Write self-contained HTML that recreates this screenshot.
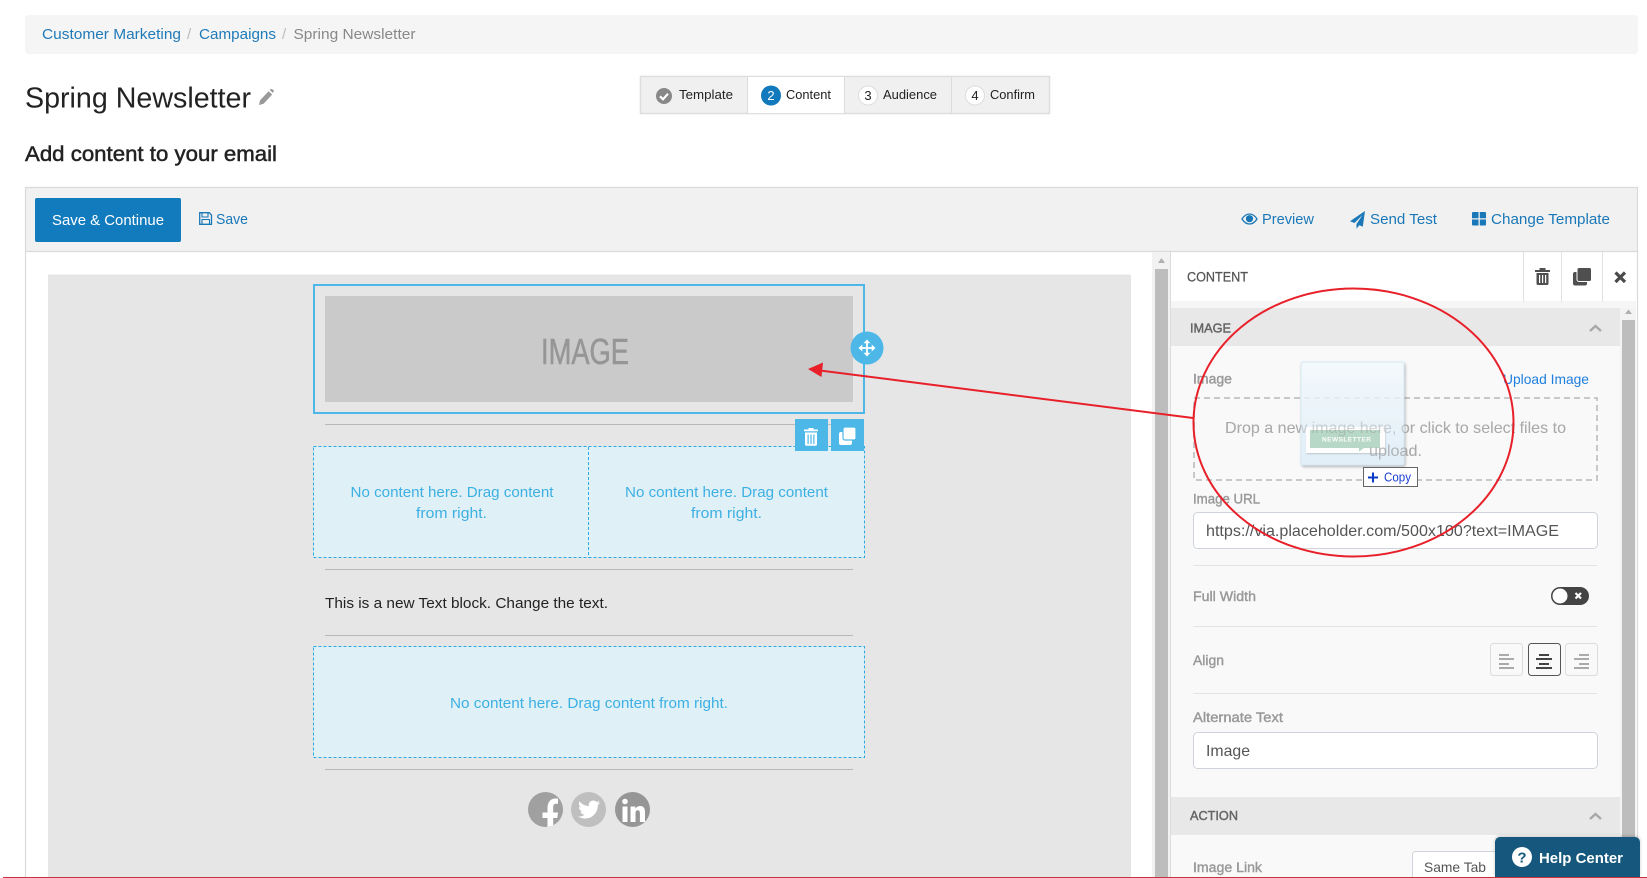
<!DOCTYPE html>
<html lang="en"><head><meta charset="utf-8"><title>Spring Newsletter</title>
<style>
html,body{margin:0;padding:0;background:#fff;width:1647px;height:878px;overflow:hidden}
svg{display:block}
text{font-family:"Liberation Sans",sans-serif;white-space:pre}
.lb{fill:#999;font-size:13.5px;stroke:#999;stroke-width:.4px}
.hd{fill:#666;font-size:13px;stroke:#666;stroke-width:.45px}
.bl{fill:#1a78b8;font-size:14.5px}
.st{fill:#222;font-size:13px}
.nc{fill:#3db0e3;font-size:14.5px}
.in{fill:#555;font-size:16px}
</style></head><body>
<svg xmlns="http://www.w3.org/2000/svg" width="1647" height="878" viewBox="0 0 1647 878">
<defs>
<linearGradient id="tg" x1="0" y1="0" x2="0" y2="1"><stop offset="0" stop-color="#f3f9fd"/><stop offset="1" stop-color="#dcedf8"/></linearGradient>
<filter id="sh" x="-10%" y="-10%" width="125%" height="125%"><feDropShadow dx="1" dy="1.5" stdDeviation="1.2" flood-color="#555" flood-opacity=".5"/></filter>
<filter id="sh2" x="-10%" y="-20%" width="120%" height="150%"><feDropShadow dx=".5" dy="1" stdDeviation=".7" flood-color="#555" flood-opacity=".35"/></filter>
<filter id="hs" x="-5%" y="-20%" width="110%" height="130%"><feDropShadow dx="0" dy="-1" stdDeviation="1.5" flood-color="#000" flood-opacity=".2"/></filter>
<clipPath id="c1"><circle cx="545.5" cy="809.5" r="17.5"/></clipPath>
</defs>

<!-- breadcrumb -->
<rect x="25" y="15" width="1613" height="39" rx="4" fill="#f5f5f5"/>
<text x="42" y="39" font-size="15" fill="#1f7ab8" textLength="139" lengthAdjust="spacingAndGlyphs">Customer Marketing</text>
<text x="187" y="39" font-size="15" fill="#bbb">/</text>
<text x="199" y="39" font-size="15" fill="#1f7ab8" textLength="77" lengthAdjust="spacingAndGlyphs">Campaigns</text>
<text x="282" y="39" font-size="15" fill="#bbb">/</text>
<text x="293.5" y="39" font-size="15" fill="#888" textLength="122" lengthAdjust="spacingAndGlyphs">Spring Newsletter</text>

<!-- title -->
<text x="25" y="107.5" font-size="29" fill="#222" textLength="226" lengthAdjust="spacingAndGlyphs">Spring Newsletter</text>
<path d="M259 105l1-4.6 8.600-9.200 3.600 3.300-8.600 9.200z M269.800 90l.8-.8c.5-.5 1.200-.5 1.700 0l1.200 1.100c.5.5.5 1.200 0 1.700l-.8.8z" fill="#999"/>

<!-- stepper -->
<rect x="640.500" y="76.500" width="409" height="37" fill="#f0f0f0" stroke="#dedede" stroke-width="1.500"/>
<rect x="748" y="77" width="96" height="36" fill="#fff"/>
<path d="M747.500 77v36M844.500 77v36M951.500 77v36" stroke="#dcdcdc" stroke-width="1"/>
<circle cx="664" cy="96" r="8" fill="#888"/>
<path d="M660 96.300l3 3 5-5.600" fill="none" stroke="#fff" stroke-width="2.200"/>
<text x="679" y="99" class="st" textLength="54" lengthAdjust="spacingAndGlyphs">Template</text>
<circle cx="771" cy="95.500" r="10" fill="#1279bd"/>
<text x="771" y="100" font-size="13" fill="#fff" text-anchor="middle">2</text>
<text x="786" y="99" class="st" textLength="45" lengthAdjust="spacingAndGlyphs">Content</text>
<circle cx="868" cy="95.500" r="9.500" fill="#fff" stroke="#ddd"/>
<text x="868" y="100" font-size="13" fill="#222" text-anchor="middle">3</text>
<text x="883" y="99" class="st" textLength="54" lengthAdjust="spacingAndGlyphs">Audience</text>
<circle cx="975" cy="95.500" r="9.500" fill="#fff" stroke="#ddd"/>
<text x="975" y="100" font-size="13" fill="#222" text-anchor="middle">4</text>
<text x="990" y="99" class="st" textLength="45" lengthAdjust="spacingAndGlyphs">Confirm</text>

<!-- heading -->
<text x="25" y="161" font-size="21" fill="#222" stroke="#222" stroke-width=".5" textLength="252" lengthAdjust="spacingAndGlyphs">Add content to your email</text>

<!-- editor frame -->
<rect x="26" y="188" width="1611" height="63" fill="#f1f1f1"/>
<path d="M25.500 878V187.500H1637.500V878M26 251.500H1637" fill="none" stroke="#dadada" stroke-width="1.200"/>

<!-- toolbar -->
<rect x="35" y="198" width="146" height="44" rx="2" fill="#117bbd"/>
<text x="52" y="225" font-size="14.500" fill="#fff" textLength="112" lengthAdjust="spacingAndGlyphs">Save &amp; Continue</text>
<path d="M199.700 212.700h9.500l2.300 2.300v9.300h-11.800z" fill="none" stroke="#1a78b8" stroke-width="1.300"/>
<path d="M202 213v4h6v-4M202 224v-4.500h7.500v4.500" fill="none" stroke="#1a78b8" stroke-width="1.100"/>
<text x="216" y="224" class="bl" textLength="32" lengthAdjust="spacingAndGlyphs">Save</text>

<path d="M1242 219c2-3.200 4.500-5 7.500-5s5.500 1.800 7.500 5c-2 3.200-4.500 5-7.500 5s-5.500-1.800-7.500-5z" fill="none" stroke="#1a78b8" stroke-width="1.300"/>
<circle cx="1249.500" cy="218.700" r="3.600" fill="#1a78b8"/>
<text x="1262" y="224" class="bl" textLength="52" lengthAdjust="spacingAndGlyphs">Preview</text>
<path d="M1365 211l-15 10.300 4.500 1.700 8-8-6 9v4.700l2.800-3.500 3.500 1.400z" fill="#1a78b8"/>
<text x="1370" y="224" class="bl" textLength="67" lengthAdjust="spacingAndGlyphs">Send Test</text>
<path d="M1472 213a1 1 0 0 1 1-1h5.500v6.200h-6.500zM1479.800 212h5.200a1 1 0 0 1 1 1v5.200h-6.200zM1472 219.500h6.500v6h-5.500a1 1 0 0 1-1-1zM1479.800 219.500h6.200v5a1 1 0 0 1-1 1h-5.200z" fill="#1a78b8"/>
<text x="1491" y="224" class="bl" textLength="119" lengthAdjust="spacingAndGlyphs">Change Template</text>

<!-- canvas -->
<rect x="26.500" y="252.500" width="1126" height="625" fill="#fff"/>
<rect x="48" y="274.500" width="1083" height="603" fill="#e6e6e6"/>
<rect x="1152" y="252.500" width="18" height="625" fill="#f2f2f2"/>
<rect x="1155" y="269" width="13" height="608" fill="#bdbdbd"/>
<path d="M1161.500 258l3.500 5h-7z" fill="#b0b0b0"/>

<rect x="314" y="285" width="550" height="128" fill="none" stroke="#4db8e8" stroke-width="2"/>
<rect x="325" y="296" width="528" height="106" fill="#cacaca"/>
<text x="541" y="364" font-size="36" fill="#969696" stroke="#969696" stroke-width=".55" textLength="88" lengthAdjust="spacingAndGlyphs">IMAGE</text>
<rect x="325" y="424" width="528" height="1" fill="#b8b8b8"/>

<rect x="313.500" y="446.500" width="551" height="111" fill="#dff0f7" stroke="#29abe2" stroke-dasharray="3 2"/>
<path d="M588.500 447v111" stroke="#29abe2" stroke-dasharray="3 2"/>
<text x="350.500" y="497" class="nc" textLength="203" lengthAdjust="spacingAndGlyphs">No content here. Drag content</text>
<text x="416" y="518" class="nc" textLength="71" lengthAdjust="spacingAndGlyphs">from right.</text>
<text x="625" y="497" class="nc" textLength="203" lengthAdjust="spacingAndGlyphs">No content here. Drag content</text>
<text x="691" y="518" class="nc" textLength="71" lengthAdjust="spacingAndGlyphs">from right.</text>

<!-- block controls -->
<rect x="795" y="419" width="33" height="32" fill="#4db8e8"/>
<rect x="831" y="419" width="33" height="32" fill="#4db8e8"/>
<path fill="#fff" fill-rule="evenodd" d="M804 429.500h14v1.800h-14zM808.500 428h5v1.500h-5zM805 432.500h12v11.800a1.500 1.500 0 0 1-1.500 1.500h-9a1.500 1.500 0 0 1-1.500-1.500zM807.500 434.500v9.500h1.200v-9.500zM810.400 434.500v9.500h1.200v-9.500zM813.300 434.500v9.500h1.200v-9.500z"/>
<rect x="839" y="432" width="13" height="13" rx="2" fill="#fff"/>
<rect x="843" y="427" width="13" height="13" rx="2" fill="#fff" stroke="#4db8e8" stroke-width="1.200"/>

<circle cx="867" cy="348" r="16.500" fill="#4db8e8"/>
<path d="M867 342v12M861 348h12" stroke="#fff" stroke-width="1.800"/>
<path d="M867 339.500l3.500 3.800h-7zM867 356.500l3.500-3.800h-7zM858.500 348l3.800-3.500v7zM875.500 348l-3.800-3.500v7z" fill="#fff"/>

<rect x="325" y="569" width="528" height="1" fill="#b8b8b8"/>
<text x="325" y="608" font-size="15" fill="#222" textLength="283" lengthAdjust="spacingAndGlyphs">This is a new Text block. Change the text.</text>
<rect x="325" y="635" width="528" height="1" fill="#b8b8b8"/>
<rect x="313.500" y="646.500" width="551" height="111" fill="#dff0f7" stroke="#29abe2" stroke-dasharray="3 2"/>
<text x="450" y="708" class="nc" textLength="278" lengthAdjust="spacingAndGlyphs">No content here. Drag content from right.</text>
<rect x="325" y="769" width="528" height="1" fill="#b8b8b8"/>

<!-- social -->
<circle cx="545.500" cy="809.500" r="17.500" fill="#a0a0a0"/>
<path clip-path="url(#c1)" fill="#fff" d="M547.500 828v-10h-5v-5.500h5v-4.500c0-6 3.200-9.500 8-9.500h2.500v5.200h-2c-2 0-2.800 1-2.800 3.300v5.500h4.800l-.7 5.500h-4.100v10z"/>
<circle cx="588.500" cy="809.500" r="17.500" fill="#bfbfbf"/>
<path transform="translate(578 798.500) scale(.92)" fill="#fff" d="M23.953 4.570a10 10 0 0 1-2.825.775 4.958 4.958 0 0 0 2.163-2.723c-.951.555-2.005.959-3.127 1.184a4.920 4.920 0 0 0-8.384 4.482C7.690 8.095 4.067 6.130 1.640 3.162a4.822 4.822 0 0 0-.666 2.475c0 1.710.870 3.213 2.188 4.096a4.904 4.904 0 0 1-2.228-.616v.060a4.923 4.923 0 0 0 3.946 4.827 4.996 4.996 0 0 1-2.212.085 4.936 4.936 0 0 0 4.604 3.417 9.867 9.867 0 0 1-6.102 2.105c-.390 0-.779-.023-1.170-.067a13.995 13.995 0 0 0 7.557 2.209c9.053 0 13.998-7.496 13.998-13.985 0-.210 0-.420-.015-.630A9.935 9.935 0 0 0 24 4.590z"/>
<circle cx="632.500" cy="809.500" r="17.500" fill="#969696"/>
<circle cx="625" cy="801.500" r="2.800" fill="#fff"/>
<rect x="622.500" y="806.500" width="5" height="15.500" fill="#fff"/>
<path fill="#fff" d="M630.500 806.500h4.800v2.200c1-1.500 2.800-2.700 4.800-2.700 3.400 0 4.900 2.200 4.900 6v10h-5.100v-8.800c0-2-.6-3-2.100-3-1.600 0-2.300 1-2.300 3v8.800h-5z"/>

<!-- right panel -->
<rect x="1170.500" y="252.500" width="466" height="625" fill="#fff"/>
<path d="M1170.500 252v626" stroke="#dcdcdc"/>
<rect x="1171" y="301" width="465" height="7" fill="#f6f6f6"/>
<rect x="1171" y="308" width="449" height="570" fill="#f9f9f9"/>
<rect x="1620" y="308" width="16" height="570" fill="#f3f3f3"/>
<rect x="1622" y="320" width="13" height="558" fill="#bdbdbd"/>
<path d="M1628.500 309.500l3.500 4.500h-7z" fill="#b0b0b0"/>
<path d="M1523.500 252v50M1561.500 252v50M1602.500 252v50" stroke="#e2e2e2"/>
<text x="1187" y="281.500" font-size="13.500" fill="#555" stroke="#555" stroke-width=".25" textLength="61" lengthAdjust="spacingAndGlyphs">CONTENT</text>
<path fill="#4f4f4f" fill-rule="evenodd" d="M1535 270h15v2h-15zM1539.500 268h6v2h-6zM1536.500 273h12v10.500a1.500 1.500 0 0 1-1.500 1.500h-9a1.500 1.500 0 0 1-1.500-1.500zM1539 275v8h1.200v-8zM1542 275v8h1.200v-8zM1545 275v8h1.200v-8z"/>
<rect x="1573" y="272" width="14" height="13.500" rx="2" fill="#4f4f4f"/>
<rect x="1577" y="267.500" width="14.500" height="14" rx="2" fill="#4f4f4f" stroke="#fff" stroke-width="1"/>
<path d="M1615.500 272.500l9.500 9.500M1625 272.500l-9.500 9.500" stroke="#4a4a4a" stroke-width="3.200"/>

<rect x="1171" y="308" width="449" height="38" fill="#e8e8e8"/>
<text x="1190" y="332.500" class="hd" textLength="41" lengthAdjust="spacingAndGlyphs">IMAGE</text>
<path d="M1590 331l5.500-5 5.500 5" fill="none" stroke="#a8a8a8" stroke-width="2.400"/>

<text x="1193" y="383.500" class="lb" textLength="39" lengthAdjust="spacingAndGlyphs">Image</text>
<text x="1503" y="384" font-size="14" fill="#1e7fe0" textLength="86" lengthAdjust="spacingAndGlyphs">Upload Image</text>
<rect x="1194" y="398" width="403" height="82" fill="none" stroke="#c8c8c8" stroke-width="2" stroke-dasharray="6 4"/>
<text x="1225" y="433" font-size="16" fill="#aaa" textLength="341" lengthAdjust="spacingAndGlyphs">Drop a new image here, or click to select files to</text>
<text x="1369" y="456" font-size="16" fill="#aaa" textLength="53" lengthAdjust="spacingAndGlyphs">upload.</text>

<text x="1193" y="503.500" class="lb" textLength="67" lengthAdjust="spacingAndGlyphs">Image URL</text>
<rect x="1193.500" y="512.500" width="404" height="36" rx="4" fill="#fff" stroke="#ced4da"/>
<text x="1206" y="536" class="in" textLength="353" lengthAdjust="spacingAndGlyphs">https://via.placeholder.com/500x100?text=IMAGE</text>
<rect x="1193" y="565" width="404" height="1" fill="#e3e3e3"/>

<text x="1193" y="601" class="lb" textLength="63" lengthAdjust="spacingAndGlyphs">Full Width</text>
<rect x="1551" y="587" width="38" height="18" rx="9" fill="#444"/>
<circle cx="1560" cy="596" r="8" fill="#fff" stroke="#444"/>
<path d="M1575.500 593l5.500 5.500M1581 593l-5.500 5.500" stroke="#fff" stroke-width="2.200"/>
<rect x="1193" y="626" width="404" height="1" fill="#e3e3e3"/>

<text x="1193" y="665" class="lb" textLength="31" lengthAdjust="spacingAndGlyphs">Align</text>
<rect x="1490.500" y="643.500" width="32" height="32" rx="3" fill="#f9f9f9" stroke="#ddd"/>
<rect x="1528.500" y="643.500" width="32" height="32" rx="3" fill="#f9f9f9" stroke="#555"/>
<rect x="1565.500" y="643.500" width="32" height="32" rx="3" fill="#f9f9f9" stroke="#ddd"/>
<path d="M1499 655h10M1499 659h15M1499 664h10M1499 668h15" stroke="#aaa" stroke-width="2"/>
<path d="M1539 655h10M1536 659h16M1539 664h10M1536 668h16" stroke="#444" stroke-width="2"/>
<path d="M1579 655h10M1574 659h15M1579 664h10M1574 668h15" stroke="#aaa" stroke-width="2"/>
<rect x="1193" y="693" width="404" height="1" fill="#e3e3e3"/>

<text x="1193" y="722" class="lb" textLength="90" lengthAdjust="spacingAndGlyphs">Alternate Text</text>
<rect x="1193.500" y="732.500" width="404" height="36" rx="4" fill="#fff" stroke="#ced4da"/>
<text x="1206" y="756" class="in" textLength="44" lengthAdjust="spacingAndGlyphs">Image</text>

<rect x="1171" y="797" width="449" height="38" fill="#e8e8e8"/>
<text x="1190" y="820" class="hd" textLength="48" lengthAdjust="spacingAndGlyphs">ACTION</text>
<path d="M1590 819l5.500-5 5.500 5" fill="none" stroke="#a8a8a8" stroke-width="2.400"/>

<text x="1193" y="872" class="lb" textLength="69" lengthAdjust="spacingAndGlyphs">Image Link</text>
<rect x="1412.500" y="851.500" width="110" height="40" rx="3" fill="#fff" stroke="#ced4da"/>
<text x="1424" y="872" font-size="14" fill="#555" textLength="62" lengthAdjust="spacingAndGlyphs">Same Tab</text>

<!-- drag thumbnail -->
<g opacity=".82">
<rect x="1301" y="362" width="103" height="103" rx="2" fill="url(#tg)" stroke="#cfe6f3" filter="url(#sh)"/>
<rect x="1306" y="427" width="79" height="26" fill="#fff" filter="url(#sh2)"/>
<path d="M1310 430h70v18h-16l-5 3.500v-3.500h-49z" fill="#a9d1bd"/>
<text x="1322" y="441.500" font-size="6.500" font-weight="bold" fill="#fff" textLength="49" lengthAdjust="spacing">NEWSLETTER</text>
</g>
<!-- text seen through the drag ghost -->
<g opacity=".4">
<text x="1225" y="433" font-size="16" fill="#aaa" textLength="341" lengthAdjust="spacingAndGlyphs">Drop a new image here, or click to select files to</text>
</g>
<g opacity=".8">
<text x="1369" y="456" font-size="16" fill="#aaa" textLength="53" lengthAdjust="spacingAndGlyphs">upload.</text>
</g>
<rect x="1363.500" y="467.500" width="54" height="19" fill="#fff" stroke="#666"/>
<path d="M1368 477.500h10M1373 472.500v10" stroke="#0a3bc4" stroke-width="2"/>
<text x="1384" y="481.500" font-size="12.500" fill="#1a3fd4" textLength="27" lengthAdjust="spacingAndGlyphs">Copy</text>

<!-- annotation -->
<ellipse cx="1353.500" cy="422.500" rx="160" ry="134" fill="none" stroke="#e8202a" stroke-width="2"/>
<path d="M1193 418L820 370.500" stroke="#e8202a" stroke-width="2"/>
<path d="M808 369l15-6.500-1.500 14.500z" fill="#e8202a"/>

<!-- help -->
<path d="M1495 877v-35a5 5 0 0 1 5-5h135a5 5 0 0 1 5 5v35z" fill="#13587d" filter="url(#hs)"/>
<circle cx="1522" cy="857" r="10" fill="#fff"/>
<text x="1522" y="862.500" font-size="15" font-weight="bold" fill="#13587d" text-anchor="middle">?</text>
<text x="1539" y="863" font-size="15" font-weight="bold" fill="#fff" textLength="84" lengthAdjust="spacingAndGlyphs">Help Center</text>

<rect x="3" y="877" width="1644" height="1" fill="#c8323c"/>
</svg>
</body></html>
